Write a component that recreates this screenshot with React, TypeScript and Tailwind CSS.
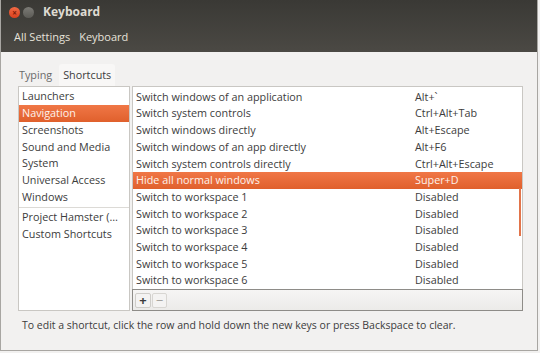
import React from "react";

const SECTIONS = [
  "Launchers",
  "Navigation",
  "Screenshots",
  "Sound and Media",
  "System",
  "Universal Access",
  "Windows",
];

const CUSTOM = ["Project Hamster (…", "Custom Shortcuts"];

const SHORTCUTS = [
  { name: "Switch windows of an application", keys: "Alt+`" },
  { name: "Switch system controls", keys: "Ctrl+Alt+Tab" },
  { name: "Switch windows directly", keys: "Alt+Escape" },
  { name: "Switch windows of an app directly", keys: "Alt+F6" },
  { name: "Switch system controls directly", keys: "Ctrl+Alt+Escape" },
  { name: "Hide all normal windows", keys: "Super+D" },
  { name: "Switch to workspace 1", keys: "Disabled" },
  { name: "Switch to workspace 2", keys: "Disabled" },
  { name: "Switch to workspace 3", keys: "Disabled" },
  { name: "Switch to workspace 4", keys: "Disabled" },
  { name: "Switch to workspace 5", keys: "Disabled" },
  { name: "Switch to workspace 6", keys: "Disabled" },
];

const FONT = { fontFamily: "'Open Sans', 'DejaVu Sans', sans-serif" };

export default function App() {
  return (
    <div
      className="flex h-[353px] w-[540px] bg-[#f2f1f0] text-[10.8px] text-[#3c3c3c]"
      style={FONT}
    >
      <div className="flex h-[351px] w-[538px] flex-col border-x border-b border-[#a8a6a2] bg-[#f2f1f0]">
        {/* title + toolbar */}
        <div className="flex h-[52px] flex-col bg-gradient-to-b from-[#3a3935] to-[#4b4944]">
          <div className="flex h-[24px] items-center px-[8px]">
            <span className="h-[11px] w-[11px] rounded-full bg-gradient-to-b from-[#f26a44] to-[#d9401d] text-center text-[8px] leading-[11px] font-bold text-[#7a1a08]">
              ×
            </span>
            <span className="ml-[3px] h-[11px] w-[11px] rounded-full bg-gradient-to-b from-[#7c7b76] to-[#5c5b56]" />
            <span className="ml-[9px] text-[12px] font-bold text-[#dfdbd2]">
              Keyboard
            </span>
          </div>
          <div className="flex h-[26px] items-center gap-[9px] px-[13px] text-[11px] text-[#e6e2da]">
            <span>All Settings</span>
            <span>Keyboard</span>
          </div>
        </div>

        {/* tabs */}
        <div className="flex h-[34px] items-end px-[16px]">
          <div className="flex h-[22px] items-center px-[2px] text-[#6a6a6a]">Typing</div>
          <div className="ml-[5px] flex h-[22px] items-center rounded-t-[3px] bg-[#f8f7f6] px-[4px] text-[#3c3c3c]">
            Shortcuts
          </div>
        </div>

        {/* panes */}
        <div className="flex h-[225px] gap-[2px] pl-[17px] pr-[14px]">
          <div className="w-[112px] border border-[#c9c7c3] bg-white pt-[1px]">
            {SECTIONS.map((s) => (
              <div
                key={s}
                className={
                  s === "Navigation"
                    ? "flex h-[16.8px] items-center bg-gradient-to-b from-[#f07746] to-[#e0602c] px-[3px] text-[#fdf2ec]"
                    : "flex h-[16.8px] items-center px-[3px]"
                }
              >
                {s}
              </div>
            ))}
            <div className="my-[1px] border-t border-[#dcdad6]" />
            {CUSTOM.map((s) => (
              <div key={s} className="flex h-[16.8px] items-center px-[3px]">
                {s}
              </div>
            ))}
          </div>

          <div className="flex flex-1 flex-col">
            <div className="relative h-[203px] overflow-hidden border border-b-0 border-[#c9c7c3] bg-white pt-[1.5px]">
              {SHORTCUTS.map((r) => (
                <div
                  key={r.name}
                  className={
                    r.keys === "Super+D"
                      ? "flex h-[16.7px] items-center bg-gradient-to-b from-[#f07746] to-[#e0602c] px-[3px] text-[#fdf2ec]"
                      : "flex h-[16.7px] items-center px-[3px]"
                  }
                >
                  <span className="w-[279px] truncate">{r.name}</span>
                  <span>{r.keys}</span>
                </div>
              ))}
              <div className="absolute right-[1px] top-[101px] h-[48px] w-[2px] bg-[#e2744a]" />
            </div>
            <div className="flex h-[22px] items-center gap-[1px] border border-[#8e8c88] bg-gradient-to-b from-[#f6f5f4] to-[#ecebe9] px-[2px]">
              <span className="flex h-[15px] w-[16px] items-center justify-center rounded-[2px] border border-[#cfcdc9] bg-[#f4f3f2] text-[13px] font-bold leading-none text-[#3c3c3c]">
                +
              </span>
              <span className="flex h-[15px] w-[15px] items-center justify-center rounded-[2px] border border-[#d8d6d2] bg-[#f4f3f2] text-[13px] leading-none text-[#a09e9a]">
                −
              </span>
            </div>
          </div>
        </div>

        {/* help */}
        <div className="flex flex-1 items-start px-[21px] pt-[7px] text-[10.5px]">
          To edit a shortcut, click the row and hold down the new keys or press Backspace to clear.
        </div>
      </div>
    </div>
  );
}
